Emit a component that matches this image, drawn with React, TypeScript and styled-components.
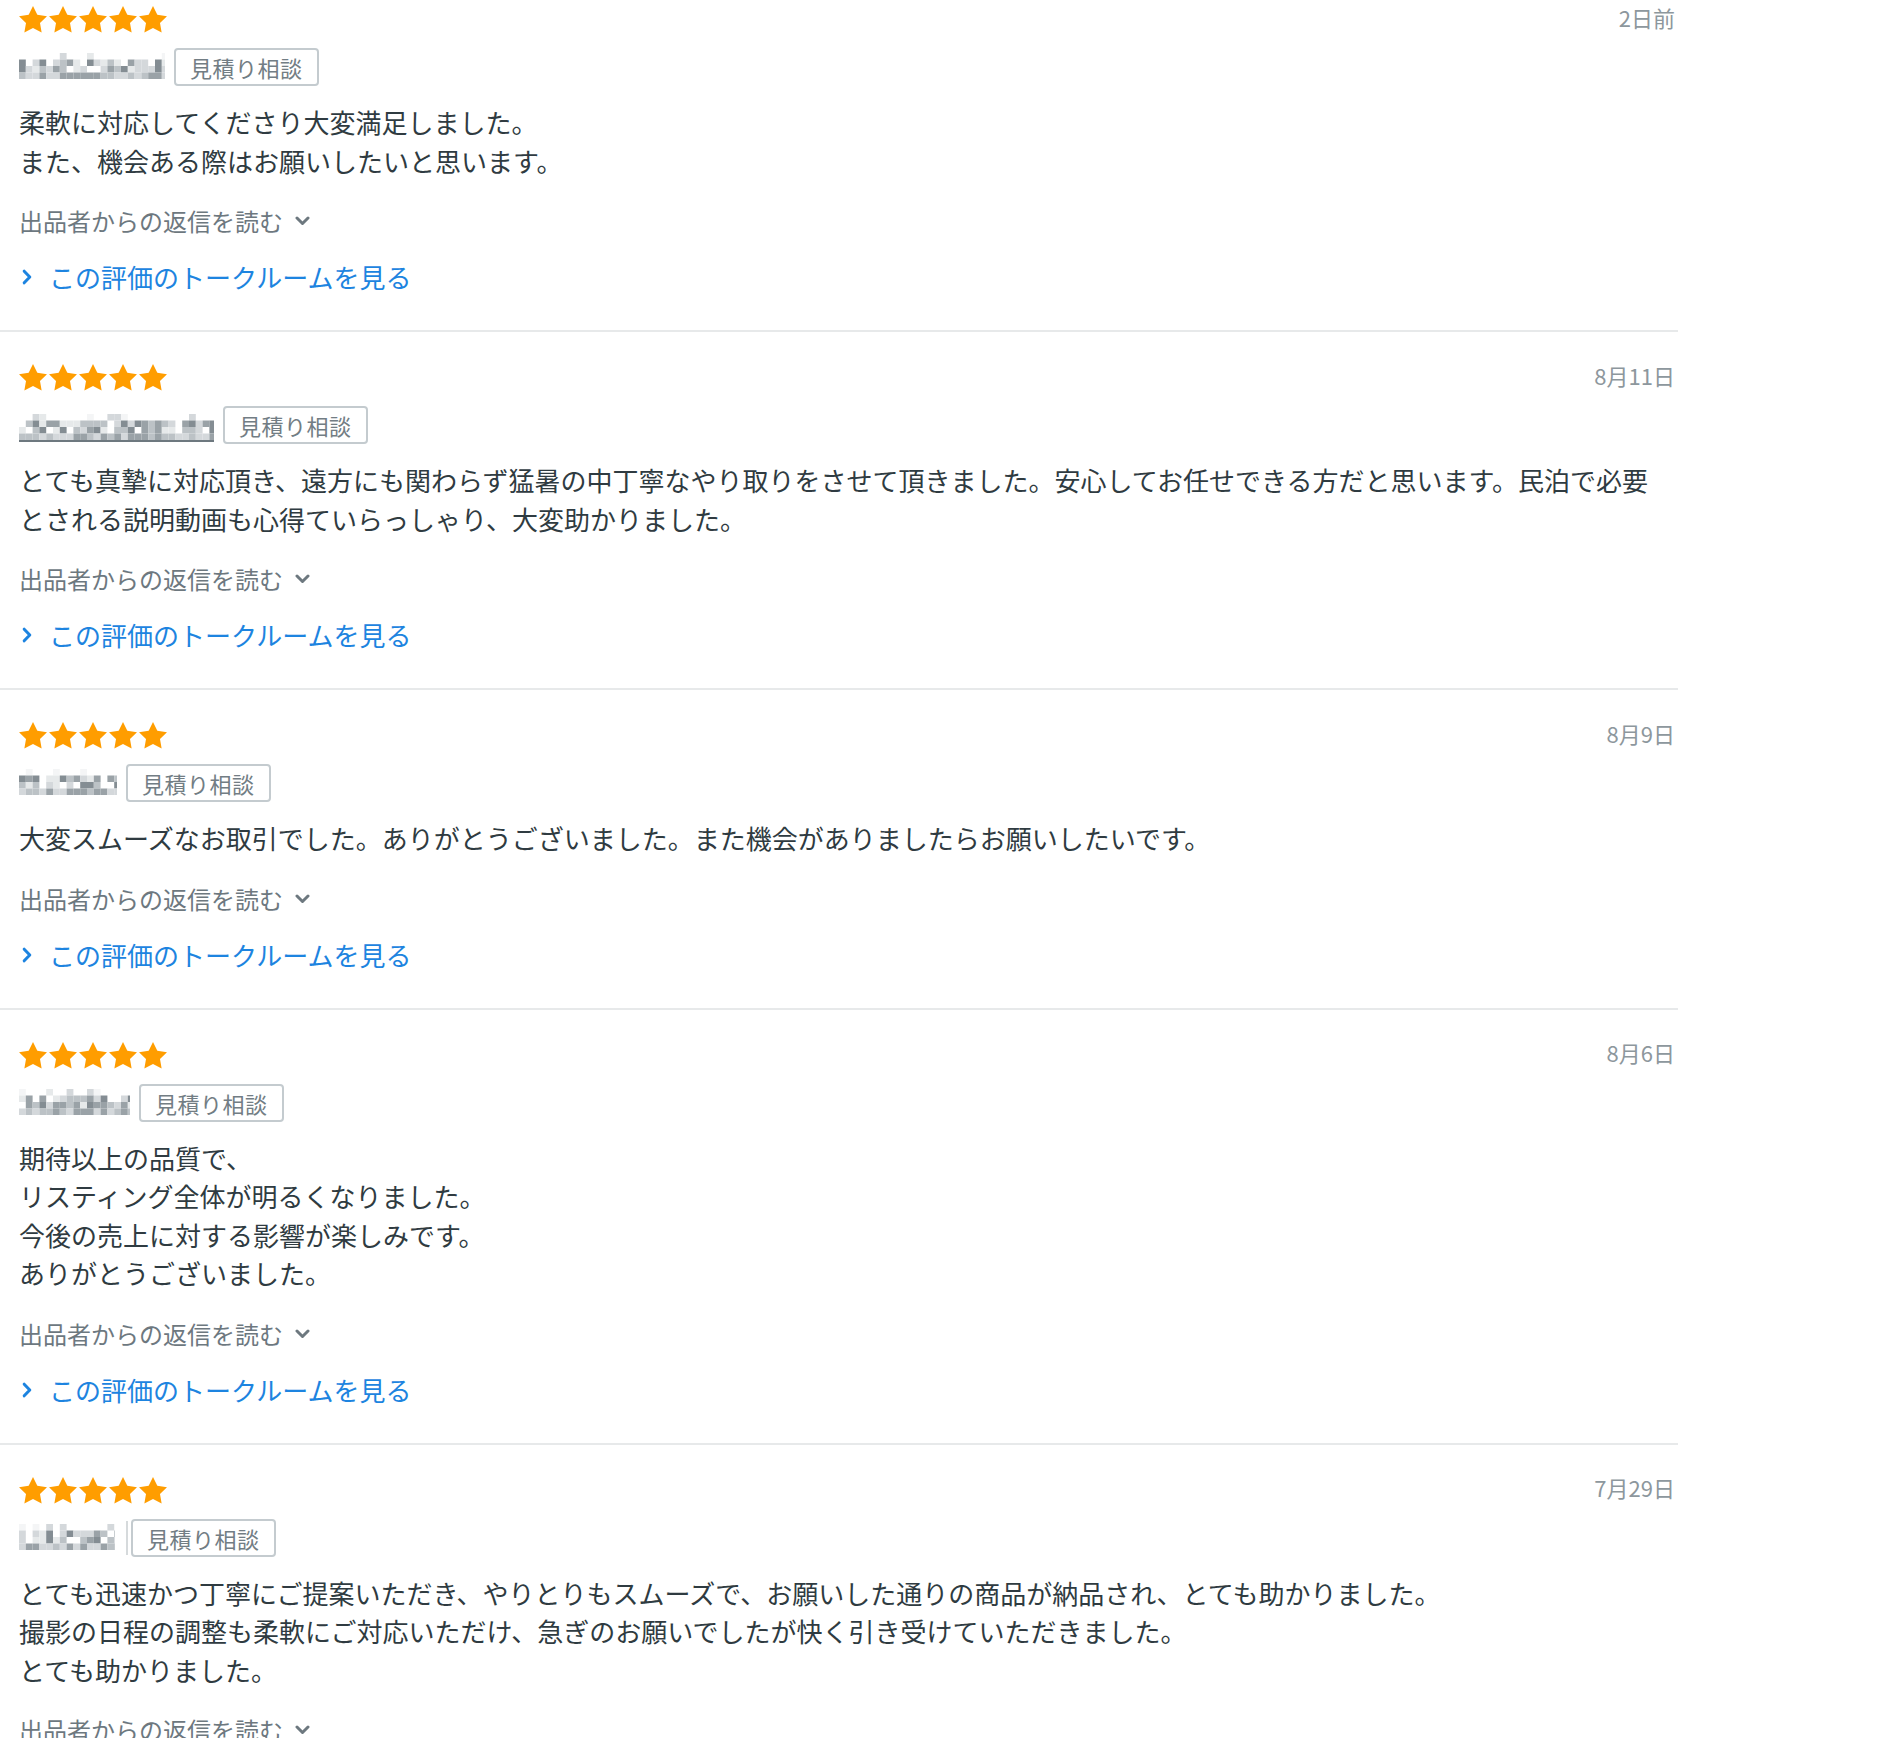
import React from "react";
import styled, { createGlobalStyle, css } from "styled-components";

interface Review {
  date: string;
  body: string;
  name: { width: number; seed: number; underline?: boolean; bar?: boolean };
}

const reviews: Review[] = [
  {
    date: "2日前",
    body: "柔軟に対応してくださり大変満足しました。\nまた、機会ある際はお願いしたいと思います。",
    name: { width: 146, seed: 7 },
  },
  {
    date: "8月11日",
    body: "とても真摯に対応頂き、遠方にも関わらず猛暑の中丁寧なやり取りをさせて頂きました。安心してお任せできる方だと思います。民泊で必要とされる説明動画も心得ていらっしゃり、大変助かりました。",
    name: { width: 195, seed: 19, underline: true },
  },
  {
    date: "8月9日",
    body: "大変スムーズなお取引でした。ありがとうございました。また機会がありましたらお願いしたいです。",
    name: { width: 98, seed: 3 },
  },
  {
    date: "8月6日",
    body: "期待以上の品質で、\nリスティング全体が明るくなりました。\n今後の売上に対する影響が楽しみです。\nありがとうございました。",
    name: { width: 111, seed: 11 },
  },
  {
    date: "7月29日",
    body: "とても迅速かつ丁寧にご提案いただき、やりとりもスムーズで、お願いした通りの商品が納品され、とても助かりました。\n撮影の日程の調整も柔軟にご対応いただけ、急ぎのお願いでしたが快く引き受けていただきました。\nとても助かりました。",
    name: { width: 96, seed: 29, bar: true },
  },
];

const GlobalStyle = createGlobalStyle`
  body {
    margin: 0;
    background: #ffffff;
    font-family: "Noto Sans CJK JP", "Noto Sans", sans-serif;
    color: #2f3b41;
  }
`;

const List = styled.ul`
  margin: 0;
  padding: 0;
  list-style: none;
  width: 1678px;
`;

const Item = styled.li`
  padding: 31px 3px 34px 19px;
  border-bottom: 2px solid #e7e9ea;
  display: flex;
  flex-direction: column;

  &:first-child {
    padding-top: 5px;
  }
`;

const Header = styled.div`
  display: flex;
  justify-content: space-between;
  align-items: center;
  height: 29px;
`;

const Stars = styled.div`
  display: flex;
  gap: 2px;
`;

const DateText = styled.span`
  font-size: 22px;
  color: #8d979d;
  line-height: 1;
  margin-top: -6px;
`;

const NameRow = styled.div`
  display: flex;
  align-items: center;
  gap: 9px;
  margin-top: 14px;
  height: 38px;
`;

const Mosaic = styled.div<{ $underline?: boolean }>`
  display: flex;
  padding-bottom: 2px;
  ${({ $underline }) =>
    $underline &&
    css`
      border-bottom: 2px solid #6d787f;
      padding-bottom: 0;
      margin-top: 6px;
    `}
`;

const Bar = styled.span`
  width: 2px;
  height: 34px;
  background: #d6dadc;
  margin-left: 2px;
  margin-right: -6px;
`;

const Badge = styled.span`
  box-sizing: border-box;
  height: 38px;
  padding: 0 14px;
  border: 2px solid #c4cbcf;
  border-radius: 4px;
  font-size: 22px;
  line-height: 34px;
  color: #727d84;
  letter-spacing: 0.5px;
`;

const Body = styled.p`
  margin: 17px 0 0;
  padding-right: 22px;
  font-size: 26px;
  line-height: 38.5px;
  white-space: pre-wrap;
  color: #2f3b41;
`;

const Reply = styled.button`
  align-self: flex-start;
  display: flex;
  align-items: center;
  gap: 12px;
  margin-top: 23px;
  padding: 0;
  border: none;
  background: none;
  font-family: inherit;
  font-size: 24px;
  line-height: 36px;
  color: #6d787f;
`;

const TalkLink = styled.a`
  align-self: flex-start;
  display: flex;
  align-items: center;
  gap: 17px;
  margin-top: 19px;
  padding-left: 3px;
  font-size: 26px;
  line-height: 38px;
  color: #1d84e0;
  text-decoration: none;
`;

const Star = () => (
  <svg width="28" height="27" viewBox="2 2 20 19.3">
    <path
      d="M12 2l3.09 6.26L22 9.27l-5 4.87 1.18 6.88L12 17.77l-6.18 3.25L7 14.14 2 9.27l6.91-1.01L12 2z"
      fill="#ff9d00"
    />
  </svg>
);

const grays = ["#f4f5f6", "#e6e9ea", "#d4d8db", "#bcc2c6", "#9aa2a7", "#848d93"];

// pixelated (blurred) user name
const NameMosaic = ({ width, seed, underline }: Review["name"]) => {
  let s = seed * 9301 + 49297;
  const rand = () => {
    s = (s * 9301 + 49297) % 233280;
    return s / 233280;
  };
  const cw = 6.8;
  const ch = 6.5;
  const rows = 4;
  const cols = Math.ceil(width / cw);
  const cells: React.ReactNode[] = [];
  for (let r = 0; r < rows; r++) {
    for (let c = 0; c < cols; c++) {
      const v = rand();
      let color: string | null;
      if (r === 0) color = v > 0.75 ? grays[Math.floor(v * 10) % 3] : null;
      else if (r === rows - 1) color = grays[2 + Math.floor(v * 3)];
      else color = v > 0.2 ? grays[Math.floor(v * 6) % 6] : null;
      if (color)
        cells.push(
          <rect key={`${r}-${c}`} x={c * cw} y={r * ch} width={cw} height={ch} fill={color} />
        );
    }
  }
  return (
    <Mosaic $underline={underline}>
      <svg width={width} height={rows * ch}>
        {cells}
      </svg>
    </Mosaic>
  );
};

const ChevronDown = () => (
  <svg width="15" height="10" viewBox="0 0 15 10">
    <path d="M2 2l5.5 5.5L13 2" fill="none" stroke="#6d787f" strokeWidth="3" strokeLinecap="round" strokeLinejoin="round" />
  </svg>
);

const ChevronRight = () => (
  <svg width="10" height="16" viewBox="0 0 10 16">
    <path d="M2.2 2.2L7.8 8l-5.6 5.8" fill="none" stroke="#1d84e0" strokeWidth="3" strokeLinecap="round" strokeLinejoin="round" />
  </svg>
);

export default function App() {
  return (
    <>
      <GlobalStyle />
      <List>
        {reviews.map((review, i) => (
          <Item key={i}>
            <Header>
              <Stars>
                {[0, 1, 2, 3, 4].map((n) => (
                  <Star key={n} />
                ))}
              </Stars>
              <DateText>{review.date}</DateText>
            </Header>
            <NameRow>
              <NameMosaic {...review.name} />
              {review.name.bar && <Bar />}
              <Badge>見積り相談</Badge>
            </NameRow>
            <Body>{review.body}</Body>
            <Reply>
              出品者からの返信を読む
              <ChevronDown />
            </Reply>
            <TalkLink href="#">
              <ChevronRight />
              この評価のトークルームを見る
            </TalkLink>
          </Item>
        ))}
      </List>
    </>
  );
}
